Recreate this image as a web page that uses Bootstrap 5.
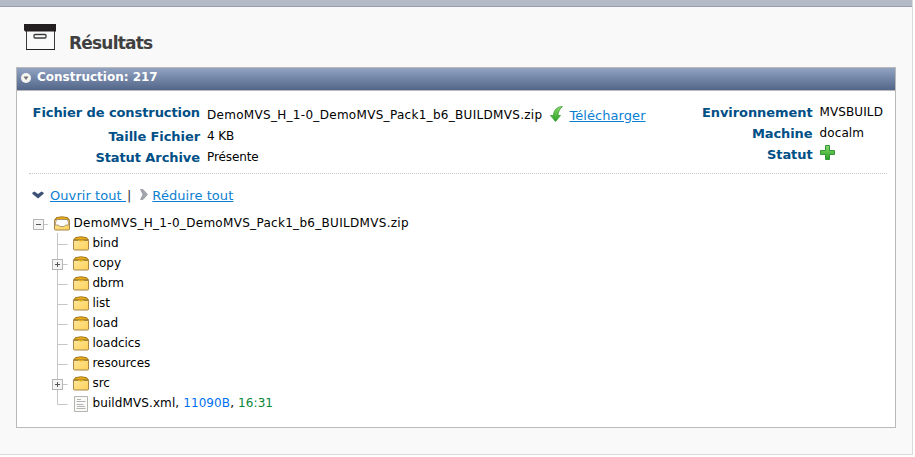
<!DOCTYPE html>
<html lang="fr">
<head>
<meta charset="utf-8">
<title>Résultats</title>
<link href="https://cdn.jsdelivr.net/npm/bootstrap@5.3.0/dist/css/bootstrap.min.css" rel="stylesheet">
<style>
body{font-family:"DejaVu Sans","Liberation Sans",sans-serif;font-size:12px;line-height:20px;color:#000;background:#fff;overflow:hidden}
svg{display:block;flex:none}
.page{width:913px;height:455px;background:#f9f9f9;border-right:1px solid #d9d9d9;border-bottom:1px solid #d9d9d9}
.topbar{height:7px;background:#b4bac6;border-bottom:1px solid #999fae}
.heading{height:60px;padding:17px 0 0 24px}
.heading h1{font-size:17px;line-height:20px;font-weight:700;color:#404040;margin:9px 0 0 12px;letter-spacing:-.8px}
.panel{width:880px;height:361px;margin-left:16px;background:#fff;border:1px solid #bababa}
.panel-head{height:23px;padding:0 0 4px 4px;background:linear-gradient(#92a3c2,#526689);border-bottom:1px solid #bababa;color:#fff;font-weight:700;letter-spacing:0}
.panel-head svg{margin-top:2px}
.head-text{margin:-1px 0 0 6px;line-height:18px}
.details{height:83px;margin:0 8px 0 12px;border-bottom:1px dotted #c8c8c8}
.left,.right{padding-top:11px}
.line{height:21px;line-height:21px}
.left .line:first-child{height:24px}
.key{color:#004f86;font-weight:700;font-size:13px;text-align:right;padding-right:7px;letter-spacing:-.08px}
.left .key{width:178px}
.right .key{width:120px;padding-right:7px}
.val{letter-spacing:-.1px}
.right{padding-right:4px}
.right .val{letter-spacing:.1px}
.archive{letter-spacing:.3px}
.drop{padding-top:3px}
.dl{margin:4px 6px 0 8px}
.plus{margin-top:1px}
a.act{color:#0b80d2;font-size:13px;letter-spacing:.07px;white-space:pre}
.tools{height:20px;margin:12px 0 0 15px;font-size:13px}
.chev{margin:5px 6px 0 0}
.bar{color:#333;margin-left:1px}
.chev2{margin:3px 4px 0 9px}
.tree{margin:7px 0 0 16px}
.node{height:20px}
.node .name{letter-spacing:-.05px}
.node .root{letter-spacing:.3px}
.node .doc{letter-spacing:.1px}
.kids{padding-left:19px}
.pic{margin:3px 3.5px 0 0}
.size,.hour{font-weight:400}
.size{color:#0070f0}
.hour{color:#088638}
</style>
<script src="https://cdn.jsdelivr.net/npm/bootstrap@5.3.0/dist/js/bootstrap.bundle.min.js"></script>
</head>
<body>
<svg width="0" height="0" class="position-absolute">
<defs>
<linearGradient id="gold" x1="0" y1="0" x2="1" y2="1"><stop offset="0" stop-color="#ffe9a2"/><stop offset="1" stop-color="#fcd158"/></linearGradient>
<linearGradient id="leaf" x1="0" y1="0" x2="0" y2="1"><stop offset="0" stop-color="#8ada6c"/><stop offset="1" stop-color="#2aa023"/></linearGradient>
</defs>
</svg>
<main class="page">
<div class="topbar"></div>
<header class="heading d-flex align-items-start">
<svg width="33" height="26" viewBox="0 0 33 26"><path d="M2.500 7v18.500h28V7" fill="#fafafa" stroke="#3a3a3c"/><path d="M2 25.500h29" stroke="#222"/><path d="M0 0h32v7.500H1L0 6z" fill="#231f20"/><rect x="10" y="10.500" width="12" height="3.500" rx="1" fill="#fff" stroke="#3a3a3c" stroke-width="1.300"/></svg>
<h1>Résultats</h1>
</header>
<section class="panel">
<div class="panel-head d-flex align-items-center">
<svg width="10" height="10" viewBox="0 0 10 10"><circle cx="5" cy="5" r="5" fill="#f5f5f2"/><path d="M2.500 3.500h5L5 7z" fill="#6d6f70"/></svg>
<span class="head-text">Construction: 217</span>
</div>
<div class="details d-flex justify-content-between">
<div class="left">
<div class="line d-flex"><div class="key">Fichier de construction</div><div class="val drop archive">DemoMVS_H_1-0_DemoMVS_Pack1_b6_BUILDMVS.zip</div>
<svg class="dl" width="13" height="16" viewBox="0 0 13 16"><path d="M12.500.5C7.500.5 3.500 4 3.500 9.500H.5l5 6 5-6H8C8 6.500 9.500 3 12.500.5z" fill="url(#leaf)" stroke="#2b9427" stroke-width=".7"/></svg>
<a class="act drop" href="#">Télécharger</a></div>
<div class="line d-flex"><div class="key">Taille Fichier</div><div class="val">4 KB</div></div>
<div class="line d-flex"><div class="key">Statut Archive</div><div class="val">Présente</div></div>
</div>
<div class="right">
<div class="line d-flex"><div class="key">Environnement</div><div class="val">MVSBUILD</div></div>
<div class="line d-flex"><div class="key">Machine</div><div class="val">docalm</div></div>
<div class="line d-flex"><div class="key">Statut</div><svg class="plus" width="15" height="15" viewBox="0 0 15 15"><path d="M5.500.5h4v5h5v4h-5v5h-4v-5h-5v-4h5z" fill="url(#leaf)" stroke="#35963a"/></svg></div>
</div>
</div>
<div class="tools d-flex">
<svg class="chev" width="12" height="8" viewBox="0 0 12 8"><path d="M.3 1.800 2.500.5 6 3 9.500.5l2.200 1.300v1L6 7.500.3 2.800z" fill="#3d5276"/></svg>
<a class="act" href="#">Ouvrir tout </a><span class="bar">|</span>
<svg class="chev2" width="8" height="11" viewBox="0 0 8 11"><path d="M.5.500h2.500l4.500 5-4.500 5H.5l2.500-5z" fill="#a2a6ac" stroke="#777c84" stroke-width=".5"/></svg>
<a class="act" href="#">Réduire tout</a>
</div>
<div class="tree" id="tree"></div>
</section>
</main>
<script>
const folder=open=>`<svg width="16" height="16" viewBox="0 0 16 16"><path d="M.5 4.500 2.500 1.500h11l2 3v8.500q0 1-1 1h-13q-1 0-1-1z" fill="url(#gold)" stroke="#a8864a"/><path d="M.7 3.800 3 1.500q5-1.600 10 0l2.300 2.300z" fill="#e9ac18" stroke="#94701c" stroke-width=".8"/>${open?'<path d="M2.500 3.500h11L15 9h-3.500l-1.300 1.500H5.800L4.500 9H1z" fill="#fff" stroke="#8c7a58" stroke-width=".7"/>':'<path d="M5.500 4q2.500 3 5 0z" fill="#e9ac18"/><path d="M.5 4.300h5M10.500 4.300h5" stroke="#8f6f2c" stroke-width=".9"/>'}</svg>`;
const file=`<svg width="16" height="16" viewBox="0 0 16 16"><path d="M1.500.5h13v15h-13z" fill="#fafaf8" stroke="#b4b5ae"/><path d="M4 3.500h4M3.500 5.500h9M3.500 8.500h7M4 10.500h8M3.500 12.500h9" stroke="#b4b4b4"/></svg>`;
const toggle=sign=>`<rect x=".5" y="6.500" width="10" height="10" fill="#f4f4f4" stroke="#b4b4b4"/><path d="M3 11.500h5${sign==='+'?'M5.500 9v5':''}" stroke="#555"/>`;
const names=['bind','copy','dbrm','list','load','loadcics','resources','src'];
const row=n=>`<div class="node d-flex"><svg width="21" height="20"><path d="M5.500 0v20M5.500 11.500h10" fill="none" stroke="#c6c6c6"/>${n==='copy'||n==='src'?toggle('+'):''}</svg><i class="pic">${folder(false)}</i><span class="name">${n}</span></div>`;
document.getElementById('tree').innerHTML=
`<div class="node d-flex"><svg width="21" height="20"><path d="M11 11.500h4" stroke="#c6c6c6"/>${toggle('-')}</svg><i class="pic">${folder(true)}</i><span class="root">DemoMVS_H_1-0_DemoMVS_Pack1_b6_BUILDMVS.zip</span></div><div class="kids">`+
names.map(row).join('')+
`<div class="node d-flex"><svg width="21" height="20"><path d="M5.500 0v11.500h10" fill="none" stroke="#c6c6c6"/></svg><i class="pic">${file}</i><span class="doc">buildMVS.xml, <b class="size">11090B</b>, <b class="hour">16:31</b></span></div></div>`;
</script>
</body>
</html>
